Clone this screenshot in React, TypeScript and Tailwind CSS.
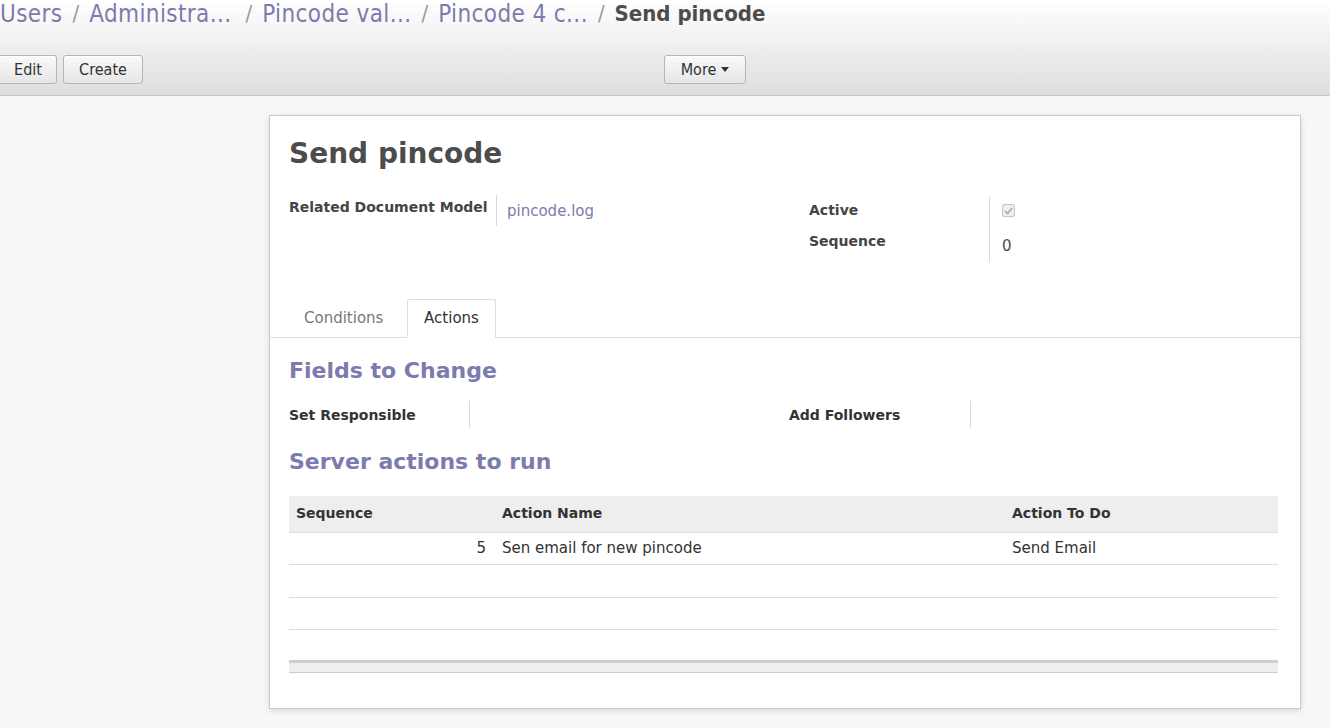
import React from 'react';

const purple = 'text-[#7c7bad]';

function Crumbs() {
  return (
    <div className="h-[28px] flex items-center leading-none font-['DejaVu_Sans_Condensed','Liberation_Sans',sans-serif] whitespace-nowrap">
      <span className={`${purple} text-[24px] tracking-[0.4px]`}>Users</span>
      <span className="text-[#999] text-[22px] mx-[10px]">/</span>
      <span className={`${purple} text-[24px] tracking-[0.4px]`}>Administra...</span>
      <span className="text-[#999] text-[22px] mx-[10px] ml-[14px]">/</span>
      <span className={`${purple} text-[24px] tracking-[0.4px]`}>Pincode val...</span>
      <span className="text-[#999] text-[22px] mx-[10px]">/</span>
      <span className={`${purple} text-[24px] tracking-[0.4px]`}>Pincode 4 c...</span>
      <span className="text-[#999] text-[22px] mx-[10px]">/</span>
      <span className="text-[#4c4c4c] text-[22px] font-bold">Send pincode</span>
    </div>
  );
}

function Btn({ children, className = '' }: { children: React.ReactNode; className?: string }) {
  return (
    <button className={`h-[29px] px-[12px] rounded-[3px] border border-[#b5b5b5] bg-gradient-to-b from-[#fafafa] to-[#e6e6e6] text-[#333] text-[16px] font-['DejaVu_Sans_Condensed',sans-serif] shadow-[inset_0_1px_0_#fff] flex items-center ${className}`}>
      {children}
    </button>
  );
}

function Sep({ h }: { h: string }) {
  return <div className={`w-px bg-[#d9d9d9] ${h}`} />;
}

export default function App() {
  return (
    <div className="w-[1330px] h-[728px] overflow-hidden bg-[#f7f7f7] font-['DejaVu_Sans','Liberation_Sans',sans-serif] text-[14px] text-[#4c4c4c]">
      {/* control panel */}
      <div className="h-[96px] bg-gradient-to-b from-[#ffffff] to-[#dedede] border-b border-[#c8c8c8]">
        <Crumbs />
        <div className="mt-[27px] flex items-center">
          <div className="flex gap-[6px] w-[664px]">
            <Btn className="w-[57px] justify-center rounded-l-none border-l-0">Edit</Btn>
            <Btn className="w-[80px] justify-center">Create</Btn>
          </div>
          <Btn className="w-[82px] justify-center gap-[5px]">
            More
            <svg width="8" height="5" viewBox="0 0 8 5"><path d="M0 0h8L4 5z" fill="#333" /></svg>
          </Btn>
        </div>
      </div>

      {/* sheet */}
      <div className="flex pt-[19px]">
        <div className="ml-[269px] w-[1032px] h-[594px] bg-white border border-[#c8c8d3] shadow-[0_2px_6px_rgba(0,0,0,0.12)]">
          <div className="px-[19px] pt-[18px]">
            <h1 className="text-[28px] leading-[40px] font-bold text-[#4c4c4c]">Send pincode</h1>

            <div className="mt-[21px] flex">
              <div className="w-[520px] flex">
                <div className="w-[207px] shrink-0 font-bold text-[#444] pt-[2px] whitespace-nowrap">Related Document Model</div>
                <Sep h="h-[31px]" />
                <div className={`${purple} pl-[10px] pt-[5px] text-[15px]`}>pincode.log</div>
              </div>
              <div className="flex">
                <div className="w-[180px] font-bold text-[#444] pt-[5px] flex flex-col gap-[10px]">
                  <div>Active</div>
                  <div>Sequence</div>
                </div>
                <Sep h="h-[65px] mt-[2px]" />
                <div className="pl-[12px] pt-[9px] flex flex-col">
                  <div className="w-[13px] h-[13px] rounded-[2px] border border-[#c6c6c6] bg-[#eee] flex items-center justify-center">
                    <svg width="9" height="8" viewBox="0 0 9 8"><path d="M1 4l2.5 2.5L8 1" stroke="#aaa" strokeWidth="1.6" fill="none" /></svg>
                  </div>
                  <div className="mt-[18px] text-[15px]">0</div>
                </div>
              </div>
            </div>
          </div>

          {/* tabs */}
          <div className="mt-[38px] border-b border-[#ddd] h-[38px] flex items-end pl-[19px]">
            <div className="h-[38px] w-[118px] pl-[15px] flex items-center text-[#777] text-[15px]">Conditions</div>
            <div className="h-[39px] w-[89px] -mb-px justify-center flex items-center text-[#333] text-[15px] bg-white border border-[#ddd] border-b-white rounded-t-[3px]">Actions</div>
          </div>

          <div className="px-[19px]">
            <h2 className={`${purple} text-[22px] font-bold mt-[18px] leading-[30px]`}>Fields to Change</h2>
            <div className="mt-[15px] flex">
              <div className="w-[500px] flex">
                <div className="w-[180px] font-bold text-[#333] pt-[4px]">Set Responsible</div>
                <Sep h="h-[27px]" />
              </div>
              <div className="flex">
                <div className="w-[181px] font-bold text-[#333] pt-[4px]">Add Followers</div>
                <Sep h="h-[27px]" />
              </div>
            </div>

            <h2 className={`${purple} text-[22px] font-bold mt-[19px] leading-[30px]`}>Server actions to run</h2>

            <table className="mt-[19px] w-[989px] border-collapse">
              <thead>
                <tr className="h-[36px] bg-[#eee] border-b border-[#ddd] text-left font-bold text-[#333]">
                  <th className="pl-[7px] w-[213px] font-bold">Sequence</th>
                  <th className="w-[510px] font-bold">Action Name</th>
                  <th className="font-bold">Action To Do</th>
                </tr>
              </thead>
              <tbody className="text-[15px] text-[#333]">
                <tr className="h-[32px] border-b border-[#ddd]">
                  <td className="text-right pr-[16px]">5</td>
                  <td>Sen email for new pincode</td>
                  <td>Send Email</td>
                </tr>
                <tr className="h-[33px] border-b border-[#ddd]"><td /><td /><td /></tr>
                <tr className="h-[32px] border-b border-[#ddd]"><td /><td /><td /></tr>
                <tr className="h-[32px]"><td /><td /><td /></tr>
              </tbody>
              <tfoot>
                <tr className="h-[11px] bg-[#eee] border-t-[3px] border-t-[#cfcfcf] border-b border-b-[#ccc]"><td /><td /><td /></tr>
              </tfoot>
            </table>
          </div>
        </div>
      </div>
    </div>
  );
}
